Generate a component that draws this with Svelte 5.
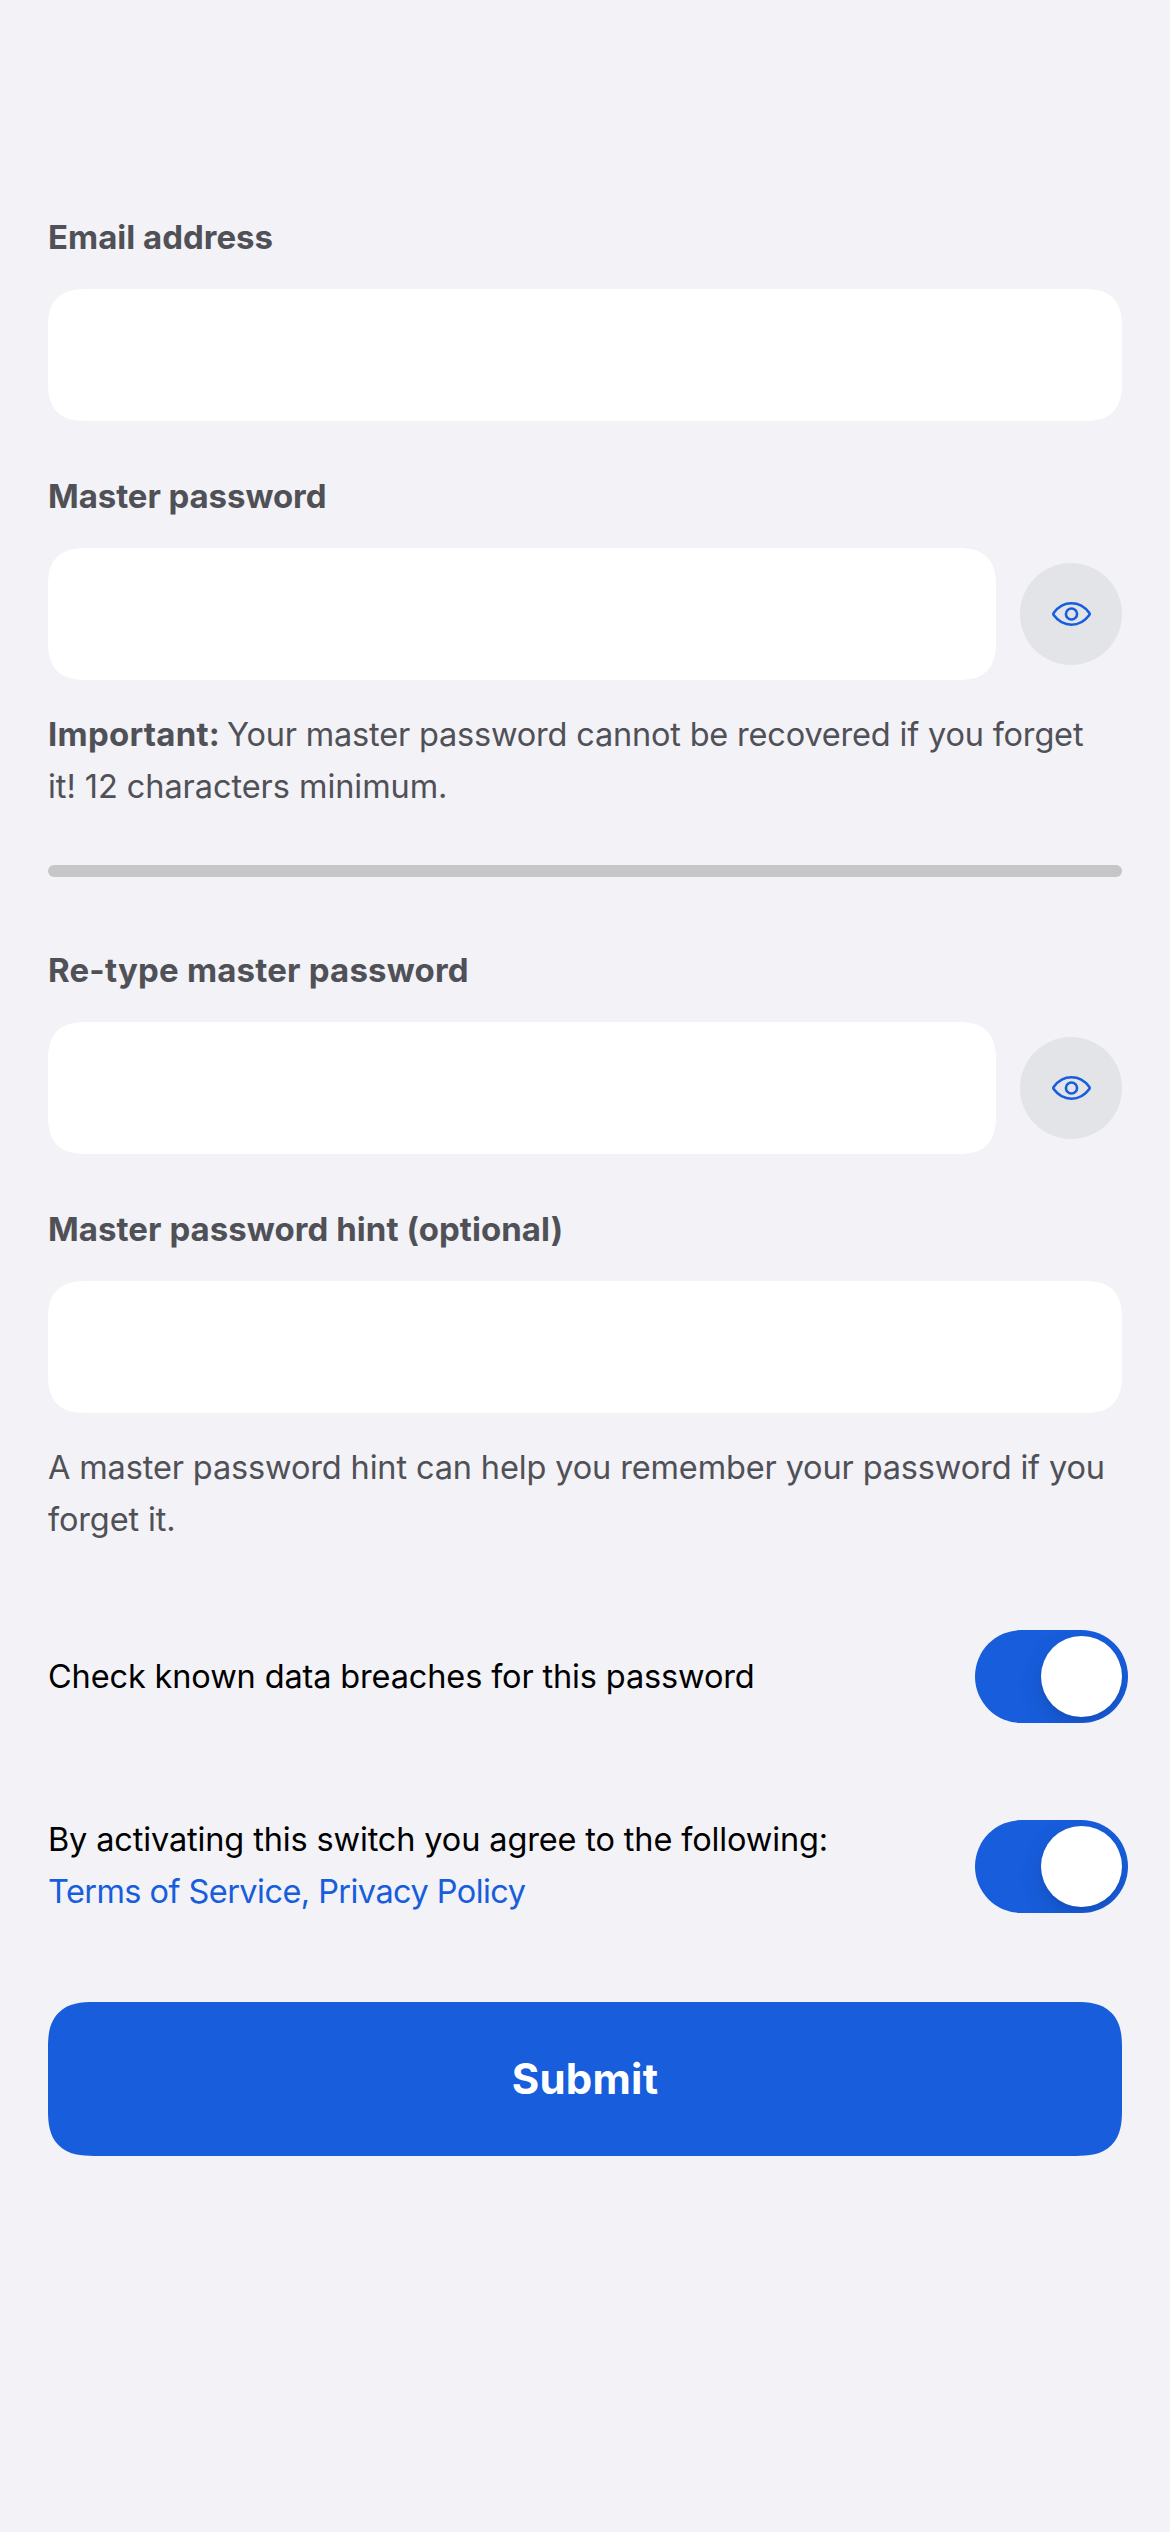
<script>
  let showPassword = $state(false);
  let showRetype = $state(false);
  let checkBreaches = $state(true);
  let acceptTerms = $state(true);
</script>

{#snippet eye()}
  <svg class="eye" viewBox="0 0 40 26" aria-hidden="true">
    <path d="M1.900 11.700C6.200 5.900 12.600 2 20 2s13.800 3.900 18.100 9.700q1 1.300 0 2.600C33.800 20.100 27.400 24 20 24S6.200 20.100 1.900 14.300q-1-1.300 0-2.600Z" />
    <circle cx="20" cy="13" r="5.700" />
  </svg>
{/snippet}

{#snippet toggle(on, flip, name)}
  <button class="toggle" class:on role="switch" aria-checked={on} aria-label={name} onclick={flip}>
    <span class="knob"></span>
  </button>
{/snippet}

<main>
  <label class="label" for="email">Email address</label>
  <input id="email" class="field" type="email" />

  <label class="label next password" for="password">Master password</label>
  <div class="row">
    <input id="password" class="field" type={showPassword ? 'text' : 'password'} />
    <button class="reveal" aria-label="Toggle visibility" onclick={() => (showPassword = !showPassword)}>
      {@render eye()}
    </button>
  </div>
  <p class="help">
    <span class="important"><strong>Important:</strong> Your master password cannot be recovered if you forget</span><br />
    <span class="minimum">it! 12 characters minimum.</span>
  </p>

  <div class="strength"></div>

  <label class="label retype" for="retype">Re-type master password</label>
  <div class="row">
    <input id="retype" class="field" type={showRetype ? 'text' : 'password'} />
    <button class="reveal" aria-label="Toggle visibility" onclick={() => (showRetype = !showRetype)}>
      {@render eye()}
    </button>
  </div>

  <label class="label next hint" for="hint">Master password hint (optional)</label>
  <input id="hint" class="field" type="text" />
  <p class="help">A master password hint can help you remember your password if you<br />forget it.</p>

  <div class="option breaches">
    <p>Check known data breaches for this password</p>
    {@render toggle(checkBreaches, () => (checkBreaches = !checkBreaches), 'Check known data breaches')}
  </div>
  <div class="option terms">
    <p>
      By activating this switch you agree to the following:<br />
      <span class="links">Terms of Service, Privacy Policy</span>
    </p>
    {@render toggle(acceptTerms, () => (acceptTerms = !acceptTerms), 'Accept terms')}
  </div>

  <button class="submit">Submit</button>
</main>

<style>
  :global(body) {
    background: #f2f2f7;
  }

  main {
    box-sizing: border-box;
    min-height: 2532px;
    padding: 211px 48px 0;
    display: flex;
    flex-direction: column;
    background: #f2f2f7;
    color: #000;
    font: 32.5px/52px Inter, 'Liberation Sans', sans-serif;
    letter-spacing: -0.14px;
  }

  button,
  input {
    margin: 0;
    padding: 0;
    border: 0;
    outline: 0;
    font-family: inherit;
  }

  p {
    margin: 0;
    white-space: nowrap;
  }

  .label {
    margin-bottom: 26px;
    color: #505057;
    font-size: 33px;
    font-weight: 700;
    letter-spacing: 0;
  }

  .label.next {
    margin-top: 49px;
  }

  .label.password {
    letter-spacing: -0.08px;
  }

  .label.retype {
    margin-top: 67px;
    letter-spacing: 0.2px;
  }

  .label.hint {
    letter-spacing: 0.05px;
  }

  .field {
    box-sizing: border-box;
    width: 100%;
    height: 132px;
    padding: 0 48px;
    border-radius: 30px;
    background: #fff;
    font-size: 33px;
  }

  .row {
    display: flex;
    align-items: center;
    gap: 24px;
  }

  .row .field {
    flex: 1;
    min-width: 0;
  }

  .reveal {
    flex: none;
    display: grid;
    place-items: center;
    width: 102px;
    height: 102px;
    border-radius: 50%;
    background: #e2e4e8;
  }

  .eye {
    width: 39px;
    height: 26px;
    fill: none;
    stroke: #175ddc;
    stroke-width: 2.700;
  }

  .help {
    margin-top: 29px;
    color: #505057;
  }

  .important {
    letter-spacing: -0.19px;
  }

  .important strong {
    margin-right: -2px;
    font-size: 33px;
    line-height: 1;
    letter-spacing: 0.25px;
  }

  .minimum {
    letter-spacing: -0.06px;
  }

  .strength {
    height: 12px;
    margin-top: 52px;
    border-radius: 6px;
    background: #c6c6c8;
  }

  .option {
    display: flex;
    align-items: center;
    justify-content: space-between;
    margin-right: -6px;
  }

  .breaches {
    height: 93px;
    margin-top: 84px;
  }

  .terms {
    height: 105px;
    margin-top: 91px;
  }

  .terms p {
    padding-bottom: 2px;
  }

  .links {
    color: #175ddc;
    letter-spacing: -0.56px;
  }

  .toggle {
    box-sizing: border-box;
    display: flex;
    width: 153px;
    height: 93px;
    padding: 6px;
    border-radius: 47px;
    background: #c6c6c8;
    overflow: hidden;
  }

  .toggle.on {
    justify-content: flex-end;
    background: #175ddc;
  }

  .knob {
    width: 81px;
    height: 81px;
    border-radius: 50%;
    background: #fff;
    box-shadow: 0 9px 24px rgb(0 0 0 / 0.13), 0 3px 3px rgb(0 0 0 / 0.04);
  }

  .submit {
    height: 154px;
    margin-top: 83px;
    padding-bottom: 2px;
    border-radius: 36px;
    background: #175ddc;
    color: #fff;
    font-size: 42px;
    font-weight: 700;
    letter-spacing: 0.24px;
  }

  @supports (corner-shape: superellipse(1.4)) {
    .field {
      border-radius: 39px;
      corner-shape: superellipse(1.4);
    }

    .submit {
      border-radius: 46px;
      corner-shape: superellipse(1.4);
    }
  }
</style>
